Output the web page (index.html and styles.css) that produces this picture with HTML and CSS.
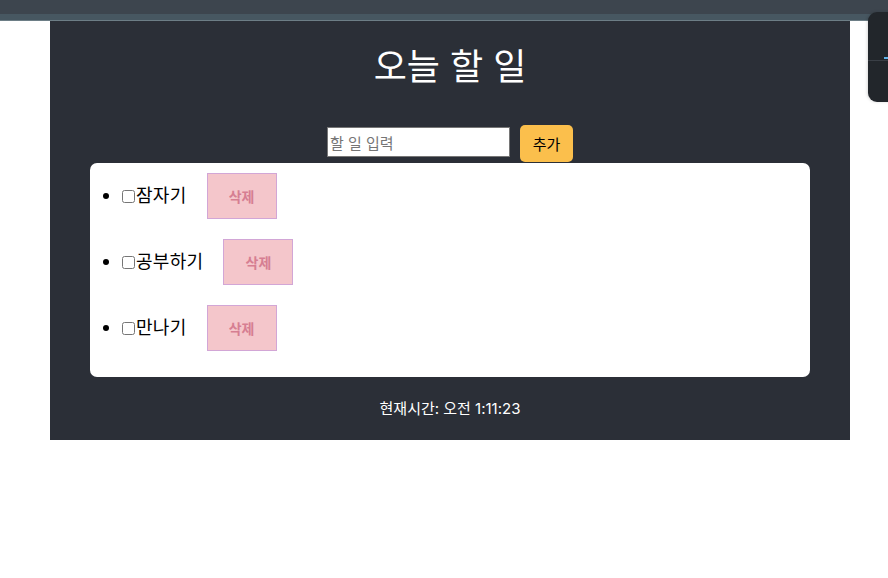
FILE: index.html
```html
<!DOCTYPE html>
<html lang="ko">
<head>
<meta charset="utf-8">
<link rel="stylesheet" href="styles.css">
</head>
<body>
<div class="topbar"><div class="topbar-strip"></div></div>
<div class="widget"><div class="widget-top"><span class="widget-mark"></span></div></div>
<div class="app">
  <h1 class="title">오늘 할 일</h1>
  <div class="form">
    <input class="input" type="text" placeholder="할 일 입력">
    <button class="add">추가</button>
  </div>
  <ul class="list">
    <li class="item"><input type="checkbox" class="check"><span class="label">잠자기</span><button class="del">삭제</button></li>
    <li class="item"><input type="checkbox" class="check"><span class="label">공부하기</span><button class="del">삭제</button></li>
    <li class="item"><input type="checkbox" class="check"><span class="label">만나기</span><button class="del">삭제</button></li>
  </ul>
  <p class="time">현재시간: 오전 1:11:23</p>
</div>
</body>
</html>
```
FILE: styles.css
```css
* { box-sizing: border-box; }
html, body { margin: 0; padding: 0; background: #ffffff; }
body { font-family: "Noto Sans", "Noto Sans CJK KR", sans-serif; height: 578px; overflow: hidden; }

.topbar { height: 21px; background: #3d454e; display: flex; flex-direction: column; justify-content: flex-end; }
.topbar-strip { height: 7px; background: #475761; border-bottom: 1px solid #6d7e86; }

.widget { position: absolute; left: 868px; top: 12px; width: 40px; height: 90px; background: #22262b; border-radius: 9px; box-shadow: -1px 0 3px rgba(0,0,0,0.15); overflow: hidden; }
.widget-top { height: 49px; border-bottom: 1px solid #3a3f46; position: relative; }
.widget-mark { position: absolute; left: 16px; top: 45px; width: 6px; height: 2px; background: #5fb2ea; }

.app { width: 800px; margin-left: 50px; background: #2b2f37; color: #ffffff; padding: 21px 40px 16px; text-align: center; }
.title { margin: 0; font-weight: 400; font-size: 36px; line-height: 50px; font-family: "Inter", "Noto Sans CJK KR", sans-serif; }
.form { display: flex; justify-content: center; align-items: flex-start; gap: 10px; margin-top: 33px; height: 37px; }
.input { width: 183px; height: 30px; margin-top: 2px; border: 1px solid #767676; padding: 0 2px; font-family: "Noto Sans CJK KR", sans-serif; font-size: 15px; background: #fff; }
.input::placeholder { color: #757575; }
.add { width: 53px; height: 37px; border: none; border-radius: 5px; background: #fbbf4c; color: #000; font-family: "Noto Sans CJK KR", sans-serif; font-size: 15px; padding: 0; }

.list { list-style: disc; text-align: left; background: #ffffff; color: #000; border-radius: 7px; margin: 1px 0 0; padding: 0 0 16px 32px; }
.item { height: 66px; line-height: 62px; font-size: 18px; font-family: "Noto Sans CJK KR", sans-serif; }
.item::marker { font-size: 16px; }
.check { width: 13px; height: 13px; margin: 0 1px 0 0; vertical-align: -1px; }
.label { letter-spacing: 0.3px; }
.del { vertical-align: top; margin: 10px 0 0 20px; width: 70px; height: 46px; background: #f4c6cb; border: 1px solid #d2a6d6; color: #d67e92; font-weight: 700; font-size: 14px; font-family: "Noto Sans CJK KR", sans-serif; padding: 0; }

.time { margin: 17px 0 0; font-size: 15px; line-height: 30px; font-family: "Inter", "Noto Sans CJK KR", sans-serif; }
```
